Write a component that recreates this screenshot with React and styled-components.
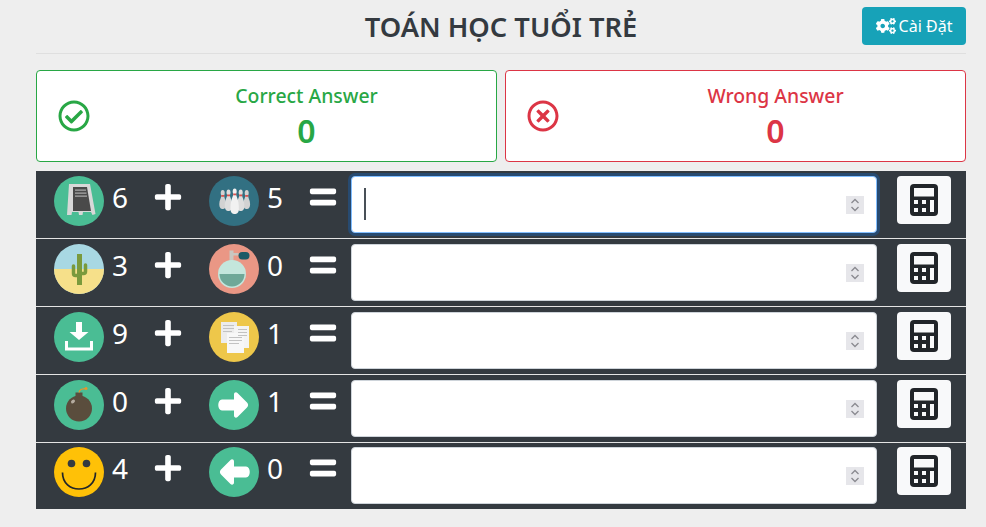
import styled, { createGlobalStyle } from 'styled-components';
import { FaCogs, FaPlus, FaEquals, FaRegCheckCircle, FaRegTimesCircle } from 'react-icons/fa';

const GlobalStyle = createGlobalStyle`
  html, body {
    margin: 0;
    padding: 0;
    background: #eeeeee;
    font-family: "Noto Sans", "Open Sans", sans-serif;
    color: #343a40;
  }
  * { box-sizing: border-box; }
`;

const Page = styled.div`
  width: 986px;
  height: 527px;
  padding: 0 20px 0 36px;
  overflow: hidden;
`;

const Header = styled.header`
  height: 54px;
  display: grid;
  grid-template-columns: 1fr auto 1fr;
  align-items: start;
  border-bottom: 1px solid #dfdfdf;
`;

const Title = styled.h1`
  grid-column: 2;
  margin: 9px 0 0;
  font-size: 27.3px;
  line-height: 36px;
  font-weight: 600;
  color: #343a40;
`;

const SettingsButton = styled.button`
  grid-column: 3;
  justify-self: end;
  margin-top: 7px;
  width: 104px;
  height: 38px;
  display: flex;
  align-items: center;
  justify-content: center;
  gap: 3px;
  border: 0;
  border-radius: 4px;
  background: #17a2b8;
  color: #fff;
  font: 16px "Noto Sans", sans-serif;
`;

const Cards = styled.section`
  margin-top: 16px;
  display: grid;
  grid-template-columns: 461px 461px;
  gap: 8px;
`;

const Card = styled.div`
  height: 92px;
  display: grid;
  grid-template-columns: 80px 1fr;
  align-items: center;
  background: #fff;
  border: 1px solid ${({ $color }) => $color};
  border-radius: 4px;
  color: ${({ $color }) => $color};
`;

const CardIcon = styled.div`
  display: flex;
  padding-left: 21px;
  font-size: 32px;
`;

const CardBody = styled.div`
  padding-top: 3px;
  text-align: center;
`;

const CardLabel = styled.div`
  font-size: 19.4px;
  line-height: 26px;
  font-weight: 500;
`;

const CardValue = styled.div`
  font-size: 32px;
  line-height: 44px;
  font-weight: 600;
`;

const Board = styled.section`
  margin-top: 9px;
  background: #343a40;
  width: 930px;
`;

const Row = styled.div`
  height: 68px;
  padding: 5px 0 0 18px;
  display: grid;
  grid-template-columns: 101px 54px 101px 41px 526px 54px;
  align-items: start;
  border-bottom: 1px solid #e4e4e4;
  &:last-child {
    height: 66px;
    padding-top: 4px;
    border-bottom: 0;
  }
`;

const Term = styled.div`
  display: flex;
  align-items: flex-start;
  gap: 8px;
`;

const Avatar = styled.svg`
  width: 50px;
  height: 50px;
  flex: none;
  display: block;
`;

const Digit = styled.span`
  color: #fff;
  font-size: 28px;
  line-height: 42px;
`;

const Operator = styled.div`
  color: #fff;
  display: flex;
  margin: 6px 0 0 -2px;
  font-size: 30px;
`;

const InputWrap = styled.div`
  position: relative;
  width: 526px;
  height: 57px;
`;

const AnswerInput = styled.input`
  width: 100%;
  height: 100%;
  padding: 6px 12px;
  font: 28px "Noto Sans", sans-serif;
  color: #495057;
  caret-color: transparent;
  background: #fff;
  border: 1px solid #ced4da;
  border-radius: 4px;
  outline: 0;
  appearance: textfield;
  &:focus {
    border-color: #80bdff;
    box-shadow: 0 0 0 3px rgba(0, 123, 255, 0.25);
  }
  &::-webkit-inner-spin-button,
  &::-webkit-outer-spin-button {
    appearance: none;
  }
`;

const Caret = styled.span`
  position: absolute;
  left: 13px;
  top: 12px;
  width: 2px;
  height: 32px;
  background: #495057;
`;

const Spinner = styled.svg`
  position: absolute;
  right: 13px;
  top: 20px;
  width: 18px;
  height: 18px;
  background: #e6e6ea;
  pointer-events: none;
`;

const CalcButton = styled.button`
  grid-column: 6;
  margin-left: 20px;
  width: 54px;
  height: 48px;
  padding: 0;
  display: flex;
  align-items: center;
  justify-content: center;
  background: #f8f9fa;
  border: 0;
  border-radius: 4px;
`;

const CalcIcon = () => (
  <svg width="28" height="32" viewBox="0 0 28 32">
    <rect width="28" height="32" rx="4" fill="#212529" />
    <rect x="4" y="4" width="20" height="8.500" fill="#f8f9fa" />
    <rect x="4" y="16" width="4" height="4" fill="#f8f9fa" />
    <rect x="12" y="16" width="4" height="4" fill="#f8f9fa" />
    <rect x="20" y="16" width="4" height="12" fill="#f8f9fa" />
    <rect x="4" y="24" width="4" height="4" fill="#f8f9fa" />
    <rect x="12" y="24" width="4" height="4" fill="#f8f9fa" />
  </svg>
);

const SignIcon = () => (
  <Avatar viewBox="0 0 50 50">
    <circle cx="25" cy="25" r="25" fill="#4abd94" />
    <path d="M15 8h21l5.500 30-3 1-1.500-3H29l-.5 3H25l-.5-3H18l-.5 3H13z" fill="#d8d8d8" />
    <path d="M19 11h14l4 24H19z" fill="#4a4a4a" />
    <path d="M21 13.500h11v1.200H21zM21 16.500h11.500v1.200H21zM21 19.500h12v1.200H21z" fill="#a9a9a9" />
  </Avatar>
);

const Pin = ({ x, top, bottom, w, fill }) => (
  <g fill={fill}>
    <ellipse cx={x} cy={top + 3} rx="2" ry="3" />
    <path d={`M${x - 1.300} ${top + 5}C${x - 1.300} ${top + 8} ${x - w} ${top + 10} ${x - w} ${bottom - 5}C${x - w} ${bottom - 1} ${x - w / 2} ${bottom} ${x} ${bottom}S${x + w} ${bottom - 1} ${x + w} ${bottom - 5}C${x + w} ${top + 10} ${x + 1.300} ${top + 8} ${x + 1.300} ${top + 5}z`} />
    <rect x={x - 1.500} y={top + 5} width="3" height="1.800" fill="#d9534f" />
  </g>
);

const BowlingIcon = () => (
  <Avatar viewBox="0 0 50 50">
    <circle cx="25" cy="25" r="25" fill="#327082" />
    <Pin x={13.700} top={14} bottom={33} w={3.400} fill="#d2d2d2" />
    <Pin x={37.700} top={14} bottom={33} w={3.400} fill="#d2d2d2" />
    <Pin x={19.500} top={13.500} bottom={35} w={3.700} fill="#dedede" />
    <Pin x={31.700} top={13.500} bottom={35} w={3.700} fill="#dedede" />
    <Pin x={25.700} top={12.500} bottom={38} w={4.200} fill="#f1f1f1" />
  </Avatar>
);

const CactusIcon = () => (
  <Avatar viewBox="0 0 50 50">
    <circle cx="25" cy="25" r="25" fill="#a8d8e3" />
    <path d="M0 25h50a25 25 0 0 1-50 0z" fill="#f6e08a" />
    <g fill="none" stroke="#7a9a3c" strokeLinecap="round">
      <path d="M25.500 10V41" strokeWidth="5" strokeLinecap="butt" />
      <path d="M19.500 22v7.500a2 2 0 0 0 2 2h3M31.500 21v6.500a2 2 0 0 1-2 2h-3" strokeWidth="3.500" />
    </g>
  </Avatar>
);

const PerfumeIcon = () => (
  <Avatar viewBox="0 0 50 50">
    <circle cx="25" cy="25" r="25" fill="#ea9785" />
    <path d="M20.500 6.500h4v2.500h5v2.500h-5V18h-4z" fill="#c9c6c0" />
    <rect x="29.500" y="8" width="11" height="7.500" rx="3.700" fill="#1d5a66" />
    <circle cx="23" cy="30" r="14" fill="#c4e6dc" />
    <path d="M10.500 30h25a12.500 12.500 0 0 1-25 0z" fill="#6fa898" />
  </Avatar>
);

const DownloadIcon = () => (
  <Avatar viewBox="0 0 50 50">
    <circle cx="25" cy="25" r="25" fill="#4abd94" />
    <path d="M22 10h6v10h6.500L25 28l-9.500-8H22z" fill="#fff" />
    <path d="M11 29h3v6.500h22V29h3v9.500H11z" fill="#fff" />
  </Avatar>
);

const PagesIcon = () => (
  <Avatar viewBox="0 0 50 50">
    <circle cx="25" cy="25" r="25" fill="#eec74a" />
    <rect x="12" y="10" width="16" height="21" fill="#ececec" />
    <rect x="25" y="14" width="15" height="22" fill="#f4f4f4" />
    <rect x="18" y="21" width="17" height="20" fill="#f7f7f7" />
    <path d="M14 13h11v1H14zM14 16h11v1H14zM14 19h9v1h-9zM29 17h9v1h-9zM29 20h9v1h-9zM29 23h9v1h-9zM20 25h13v1H20zM20 28h13v1H20zM20 31h10v1H20z" fill="#c2c2c2" />
  </Avatar>
);

const BombIcon = () => (
  <Avatar viewBox="0 0 50 50">
    <circle cx="25" cy="25" r="25" fill="#4abd94" />
    <circle cx="25" cy="28.500" r="13" fill="#5a4d3d" />
    <rect x="21.500" y="12.500" width="7" height="5" fill="#5a4d3d" />
    <path d="M25 12.500c.5-2.500 1.500-3.500 6-3.800" fill="none" stroke="#e8952c" strokeWidth="1.200" />
    <circle cx="32" cy="8.500" r="1.500" fill="#e8952c" />
    <ellipse cx="19" cy="21.500" rx="2.200" ry="1.600" transform="rotate(-40 19 21.500)" fill="#b5aca0" />
  </Avatar>
);

const ArrowIcon = ({ left }) => (
  <Avatar viewBox="0 0 50 50">
    <circle cx="25" cy="25" r="25" fill="#4abd94" />
    <path
      d="M13 19.500h12v-5c0-2 2-3 3.500-1.500L38 22.500c1.500 1.500 1.500 3.500 0 5L28.500 37c-1.500 1.500-3.500.5-3.500-1.500v-5H13c-5 0-5-11 0-11z"
      fill="#fff"
      transform={left ? 'rotate(180 25 25)' : undefined}
    />
  </Avatar>
);

const SmileIcon = () => (
  <Avatar viewBox="0 0 50 50">
    <circle cx="25" cy="25" r="25" fill="#ffc107" />
    <circle cx="17.500" cy="16.500" r="3.800" fill="#343a40" />
    <circle cx="32.500" cy="16.500" r="3.800" fill="#343a40" />
    <path d="M8.500 25.500c0 11 8 16.500 16.500 16.500s16.500-5.500 16.500-16.500" fill="none" stroke="#212529" strokeWidth="1.700" />
  </Avatar>
);

const questions = [
  { a: 6, b: 5, A: SignIcon, B: BowlingIcon },
  { a: 3, b: 0, A: CactusIcon, B: PerfumeIcon },
  { a: 9, b: 1, A: DownloadIcon, B: PagesIcon },
  { a: 0, b: 1, A: BombIcon, B: () => <ArrowIcon /> },
  { a: 4, b: 0, A: SmileIcon, B: () => <ArrowIcon left /> },
];

export default function App() {
  return (
    <Page>
      <GlobalStyle />
      <Header>
        <Title>TOÁN HỌC TUỔI TRẺ</Title>
        <SettingsButton><FaCogs size={20} />Cài Đặt</SettingsButton>
      </Header>
      <Cards>
        <Card $color="#28a745">
          <CardIcon><FaRegCheckCircle /></CardIcon>
          <CardBody>
            <CardLabel>Correct Answer</CardLabel>
            <CardValue>0</CardValue>
          </CardBody>
        </Card>
        <Card $color="#dc3545">
          <CardIcon><FaRegTimesCircle /></CardIcon>
          <CardBody>
            <CardLabel>Wrong Answer</CardLabel>
            <CardValue>0</CardValue>
          </CardBody>
        </Card>
      </Cards>
      <Board>
        {questions.map(({ a, b, A, B }, i) => (
          <Row key={i}>
            <Term><A /><Digit>{a}</Digit></Term>
            <Operator><FaPlus /></Operator>
            <Term><B /><Digit>{b}</Digit></Term>
            <Operator><FaEquals /></Operator>
            <InputWrap>
              <AnswerInput type="number" autoFocus={i === 0} />
              {i === 0 && <Caret />}
              <Spinner viewBox="0 0 18 18">
                <path d="M5.500 7L9 3.500 12.500 7M5.500 11L9 14.500 12.500 11" fill="none" stroke="#8a8a90" strokeWidth="1.300" />
              </Spinner>
            </InputWrap>
            <CalcButton><CalcIcon /></CalcButton>
          </Row>
        ))}
      </Board>
    </Page>
  );
}
